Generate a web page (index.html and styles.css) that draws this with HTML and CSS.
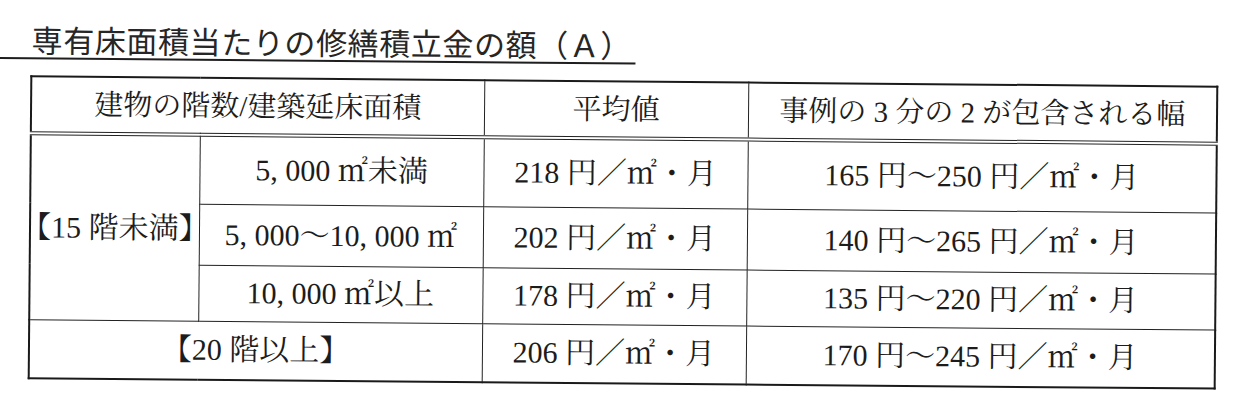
FILE: index.html
```html
<!DOCTYPE html>
<html lang="ja">
<head>
<meta charset="utf-8">
<link rel="stylesheet" href="styles.css">
</head>
<body>
<div class="page">
  <h1 class="title">専有床面積当たりの修繕積立金の額（Ａ）</h1>
  <table class="fees">
    <colgroup>
      <col class="c1"><col class="c2"><col class="c3"><col class="c4">
    </colgroup>
    <thead>
      <tr class="r-head">
        <th colspan="2">建物の階数/建築延床面積</th>
        <th>平均値</th>
        <th>事例の <span class="n">3</span> 分の <span class="n">2</span> が包含される幅</th>
      </tr>
    </thead>
    <tbody>
      <tr class="r1">
        <td rowspan="3" class="grp"><span class="bl">【</span><span class="n">15</span> 階未満<span class="br">】</span></td>
        <td class="area"><span class="n">5, 000</span> ㎡未満</td>
        <td><span class="n">218</span> 円／㎡・月</td>
        <td><span class="n">165</span> 円～<span class="n">250</span> 円／㎡・月</td>
      </tr>
      <tr class="r2">
        <td class="area"><span class="n">5, 000</span>～<span class="n">10, 000</span> ㎡</td>
        <td><span class="n">202</span> 円／㎡・月</td>
        <td><span class="n">140</span> 円～<span class="n">265</span> 円／㎡・月</td>
      </tr>
      <tr class="r3">
        <td class="area"><span class="n">10, 000</span> ㎡以上</td>
        <td><span class="n">178</span> 円／㎡・月</td>
        <td><span class="n">135</span> 円～<span class="n">220</span> 円／㎡・月</td>
      </tr>
      <tr class="r4">
        <td colspan="2" class="grp2"><span class="bl">【</span><span class="n">20</span> 階以上<span class="br">】</span></td>
        <td><span class="n">206</span> 円／㎡・月</td>
        <td><span class="n">170</span> 円～<span class="n">245</span> 円／㎡・月</td>
      </tr>
    </tbody>
  </table>
</div>
</body>
</html>
```
FILE: styles.css
```css
html, body {
  margin: 0;
  padding: 0;
  background: #ffffff;
}
.page {
  width: 1241px;
  height: 410px;
  transform: rotate(0.5deg);
  transform-origin: 0 0;
  color: #1c1c1c;
}
.title {
  display: block;
  width: 604px;
  margin: 0;
  padding: 23px 0 2px 32px;
  font-family: "Noto Sans CJK JP", "Liberation Sans", sans-serif;
  font-weight: 400;
  font-size: 31px;
  line-height: 32px;
  letter-spacing: 0.6px;
  color: #262626;
  border-bottom: 2px solid #1e1e1e;
  white-space: nowrap;
}
.fees {
  margin: 16px 0 0 31px;
  width: 1186px;
  table-layout: fixed;
  border-collapse: collapse;
  border: 2px solid #1a1a1a;
  font-family: "Liberation Serif", "Noto Serif CJK JP", "Noto Sans CJK JP", serif;
  font-size: 30px;
  color: #1c1c1c;
}
.c1 { width: 169px; }
.c2 { width: 284px; }
.c3 { width: 264px; }
.c4 { width: 469px; }
.fees th, .fees td {
  border: 1.5px solid #222222;
  padding: 0;
  text-align: center;
  vertical-align: middle;
  font-weight: 400;
  white-space: nowrap;
  line-height: 1;
}
.fees th {
  font-size: 29px;
  border-bottom: 4px double #222222;
}
.r-head { height: 57px; }
.r1 { height: 69px; }
.r2 { height: 61px; }
.r3 { height: 56px; }
.r4 { height: 59px; }
.n { font-family: "Liberation Serif", serif; }
.bl { margin-left: -0.45em; }
.br { margin-right: -0.45em; }
.grp { padding-left: 2px; }
```
